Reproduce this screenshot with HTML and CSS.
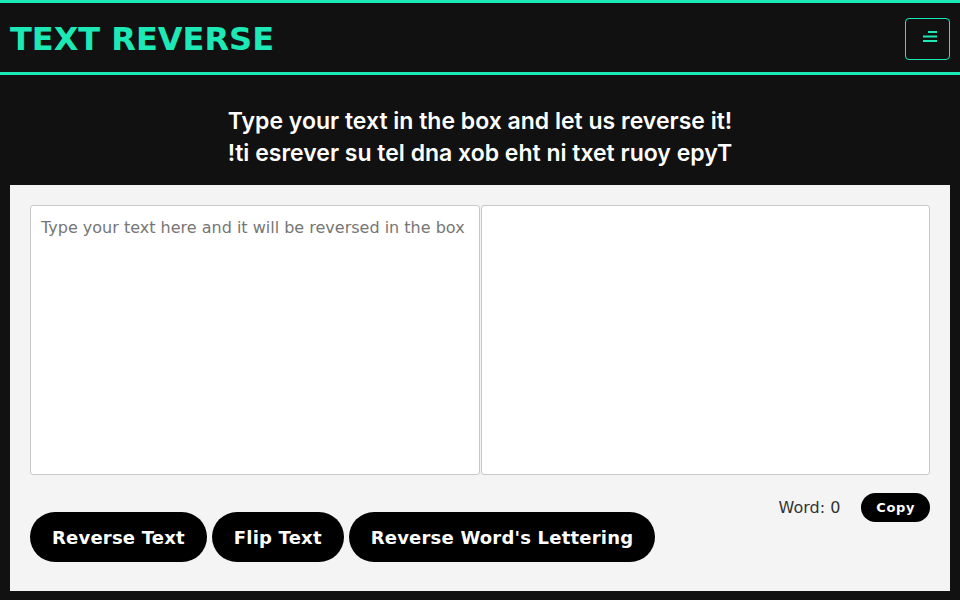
FILE: index.html
```html
<!DOCTYPE html>
<html lang="en">
<head>
<meta charset="utf-8">
<title>Text Reverse</title>
<link rel="stylesheet" href="styles.css">
</head>
<body>
<header class="topbar">
  <div class="brand">TEXT REVERSE</div>
  <button class="toggler" aria-label="Menu">
    <svg width="16" height="14" viewBox="0 0 16 14">
      <rect x="6" y="1" width="9" height="2" fill="#1de9b6"/>
      <rect x="1" y="5.5" width="14" height="2" fill="#1de9b6"/>
      <rect x="1" y="10" width="14" height="2" fill="#1de9b6"/>
    </svg>
  </button>
</header>
<section class="intro">
  <p>Type your text in the box and let us reverse it!</p>
  <p>!ti esrever su tel dna xob eht ni txet ruoy epyT</p>
</section>
<main class="panel">
  <div class="boxes">
    <textarea class="box" placeholder="Type your text here and it will be reversed in the box"></textarea>
    <textarea class="box" readonly></textarea>
  </div>
  <div class="controls">
    <div class="actions">
      <button class="btn">Reverse Text</button>
      <button class="btn">Flip Text</button>
      <button class="btn">Reverse Word's Lettering</button>
    </div>
    <div class="meta">
      <span class="count">Word: 0</span>
      <button class="copy">Copy</button>
    </div>
  </div>
</main>
</body>
</html>
```
FILE: styles.css
```css
* { box-sizing: border-box; }
html, body { margin: 0; padding: 0; }
body {
  background: #111111;
  font-family: "DejaVu Sans", sans-serif;
  padding-bottom: 9px;
}
.topbar {
  border-top: 3px solid #1de9b6;
  border-bottom: 3px solid #1de9b6;
  background: #111111;
  height: 75px;
  display: flex;
  align-items: center;
  justify-content: space-between;
  padding: 0 10px;
}
.brand {
  color: #1de9b6;
  font-family: "DejaVu Sans", sans-serif;
  font-weight: bold;
  font-size: 32px;
  line-height: 1;
  margin-top: 2px;
}
.toggler {
  width: 45px;
  height: 42px;
  border: 1px solid #1de9b6;
  border-radius: 4px;
  background: transparent;
  display: flex;
  align-items: center;
  justify-content: center;
  padding: 0;
  margin-top: 2px;
}
.toggler svg { display: block; margin-left: 4px; margin-top: -3px; }
.intro {
  padding: 30px 10px 16px;
  text-align: center;
  color: #ffffff;
  font-family: Inter, "Open Sans", sans-serif;
  font-weight: 600;
  font-size: 23px;
  line-height: 32px;
}
.intro p { margin: 0; }
.panel {
  margin: 0 10px;
  background: #f4f4f4;
  padding: 20px 20px 29px;
}
.boxes {
  display: flex;
  gap: 1px;
}
.box {
  flex: 1;
  height: 270px;
  border: 1px solid #c8c8c8;
  border-radius: 3px;
  background: #ffffff;
  padding: 9px 10px;
  font-family: "DejaVu Sans", sans-serif;
  font-size: 16px;
  line-height: 26px;
  color: #333;
  resize: none;
  margin: 0;
}
.box::placeholder { color: #767676; }
.controls {
  display: flex;
  justify-content: space-between;
  align-items: flex-start;
}
.actions {
  display: flex;
  gap: 5px;
  padding-top: 37px;
}
.btn {
  background: #000;
  color: #fff;
  border: none;
  border-radius: 25px;
  height: 50px;
  padding: 0 22px;
  font-family: "DejaVu Sans", sans-serif;
  font-weight: bold;
  font-size: 18px;
  letter-spacing: 0.2px;
}
.meta {
  display: flex;
  align-items: center;
  gap: 21px;
  margin-top: 18px;
}
.count {
  color: #333;
  font-size: 16px;
}
.copy {
  background: #000;
  color: #fff;
  border: none;
  border-radius: 15px;
  height: 29px;
  padding: 0 15px;
  font-family: "DejaVu Sans", sans-serif;
  font-weight: bold;
  font-size: 13px;
  letter-spacing: 0.6px;
}
```
